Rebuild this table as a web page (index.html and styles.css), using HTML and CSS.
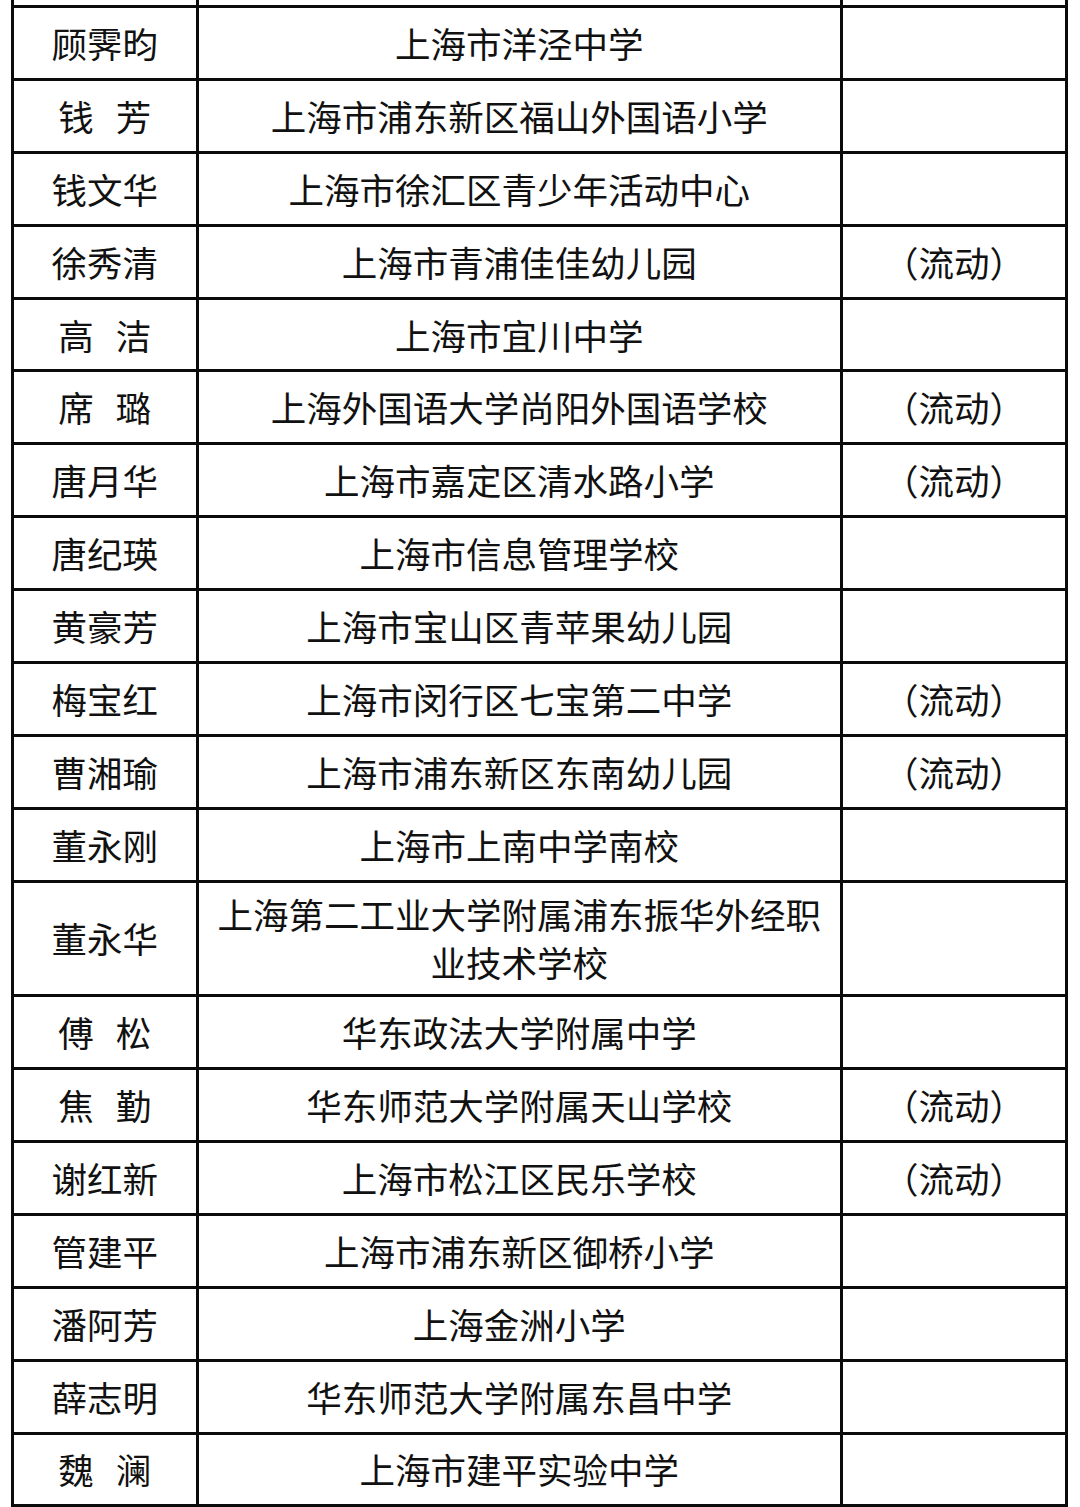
FILE: index.html
```html
<!DOCTYPE html>
<html lang="zh-CN">
<head>
<meta charset="utf-8">
<link rel="stylesheet" href="styles.css">
</head>
<body>
<table class="roster">
<colgroup><col class="c-name"><col class="c-unit"><col class="c-note"></colgroup>
<tbody>
<tr class="cut"><td></td><td></td><td></td></tr>
<tr><td>顾霁昀</td><td>上海市洋泾中学</td><td></td></tr>
<tr><td>钱<span class="gap"></span>芳</td><td>上海市浦东新区福山外国语小学</td><td></td></tr>
<tr><td>钱文华</td><td>上海市徐汇区青少年活动中心</td><td></td></tr>
<tr><td>徐秀清</td><td>上海市青浦佳佳幼儿园</td><td>（流动）</td></tr>
<tr><td>高<span class="gap"></span>洁</td><td>上海市宜川中学</td><td></td></tr>
<tr><td>席<span class="gap"></span>璐</td><td>上海外国语大学尚阳外国语学校</td><td>（流动）</td></tr>
<tr><td>唐月华</td><td>上海市嘉定区清水路小学</td><td>（流动）</td></tr>
<tr><td>唐纪瑛</td><td>上海市信息管理学校</td><td></td></tr>
<tr><td>黄豪芳</td><td>上海市宝山区青苹果幼儿园</td><td></td></tr>
<tr><td>梅宝红</td><td>上海市闵行区七宝第二中学</td><td>（流动）</td></tr>
<tr><td>曹湘瑜</td><td>上海市浦东新区东南幼儿园</td><td>（流动）</td></tr>
<tr><td>董永刚</td><td>上海市上南中学南校</td><td></td></tr>
<tr class="tall"><td>董永华</td><td>上海第二工业大学附属浦东振华外经职<br>业技术学校</td><td></td></tr>
<tr><td>傅<span class="gap"></span>松</td><td>华东政法大学附属中学</td><td></td></tr>
<tr><td>焦<span class="gap"></span>勤</td><td>华东师范大学附属天山学校</td><td>（流动）</td></tr>
<tr><td>谢红新</td><td>上海市松江区民乐学校</td><td>（流动）</td></tr>
<tr><td>管建平</td><td>上海市浦东新区御桥小学</td><td></td></tr>
<tr><td>潘阿芳</td><td>上海金洲小学</td><td></td></tr>
<tr><td>薛志明</td><td>华东师范大学附属东昌中学</td><td></td></tr>
<tr><td>魏<span class="gap"></span>澜</td><td>上海市建平实验中学</td><td></td></tr>
</tbody>
</table>
</body>
</html>
```

FILE: styles.css
```css
html, body {
  margin: 0;
  padding: 0;
  background: #ffffff;
}

.roster {
  margin-left: 11px;
  width: 1057px;
  table-layout: fixed;
  border-collapse: collapse;
  font-family: "Noto Sans CJK SC", "Noto Sans", sans-serif;
  font-size: 35.5px;
  color: #111111;
}

.c-name { width: 184.5px; }
.c-unit { width: 644.5px; }
.c-note { width: 225px; }

.roster td {
  border: 3px solid #0b0b0b;
  height: 72.9px;
  padding: 0;
  text-align: center;
  vertical-align: middle;
  line-height: 48px;
  white-space: nowrap;
  box-sizing: border-box;
}

.roster tr.cut td {
  height: 6.5px;
  line-height: 0;
  border-top-style: hidden;
}

.roster tr.tall td {
  height: 114.5px;
}

.gap {
  display: inline-block;
  width: 22px;
}
```
